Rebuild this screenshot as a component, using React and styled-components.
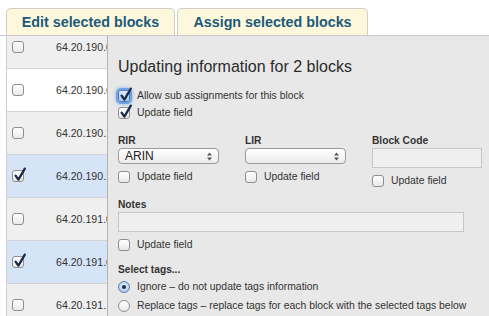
import React from "react";
import styled, { createGlobalStyle, css } from "styled-components";

const Global = createGlobalStyle`
  html, body {
    margin: 0;
    padding: 0;
    background: #fff;
    overflow: hidden;
  }
  body {
    font-family: "Liberation Sans", Arial, Helvetica, sans-serif;
    color: #333;
  }
`;

const Page = styled.div`
  width: 489px;
  height: 316px;
  padding-top: 8px;
  box-sizing: border-box;
  overflow: hidden;
`;

const TabBar = styled.div`
  display: flex;
  gap: 2px;
  padding-left: 6px;
  height: 27px;
  border-bottom: 1px solid #c9c9c9;
`;

const Tab = styled.div`
  width: ${(p) => p.w}px;
  box-sizing: border-box;
  background: #fdf8dc;
  border: 1px solid #d0d0c8;
  border-bottom: none;
  border-radius: 5px 5px 0 0;
  color: #1b5a7b;
  font-weight: bold;
  font-size: 14.3px;
  line-height: 26px;
  text-align: center;
`;

const Content = styled.div`
  display: flex;
  margin-left: 6px;
  height: 280px;
`;

const Table = styled.div`
  width: 100px;
  border-left: 1px solid #cfcfcf;
  overflow: hidden;
  flex-shrink: 0;
`;

const Rows = styled.div`
  margin-top: -10px;
`;

const Row = styled.div`
  display: flex;
  align-items: center;
  height: 42px;
  border-bottom: 1px solid #d2d2d2;
  padding-left: 5px;
  background: ${(p) => (p.selected ? "#d6e4f8" : p.odd ? "#efefef" : "#fff")};
`;

const Ip = styled.span`
  margin-left: 32px;
  font-size: 10.6px;
  color: #333;
  white-space: nowrap;
`;

const Panel = styled.div`
  flex: 1;
  background: #e8e8e8;
  border-left: 1px solid #b4b4b4;
  padding: 21px 0 0 10px;
  box-sizing: border-box;
`;

const Title = styled.h2`
  margin: 0 0 10px;
  font-size: 16px;
  font-weight: normal;
  line-height: 20px;
  color: #2b2b2b;
`;

const CheckRow = styled.label`
  display: flex;
  align-items: center;
  gap: 7px;
  height: ${(p) => p.h || 17}px;
  font-size: 10.4px;
  color: #333;
  white-space: nowrap;
`;

const boxBase = css`
  position: relative;
  width: 12px;
  height: 12px;
  box-sizing: border-box;
  flex-shrink: 0;
  border: 1px solid #8e8e8e;
  background: linear-gradient(#ffffff, #e9e9e9);
`;

const Box = styled.span`
  ${boxBase};
  border-radius: 3px;
  ${(p) =>
    p.focus &&
    css`
      border-color: #4d7fbf;
      background: linear-gradient(#dce9fb, #aecbf0);
      box-shadow: 0 0 0 2px rgba(93, 150, 220, 0.8), 0 0 3px 3px rgba(120, 170, 230, 0.5);
    `}
  svg {
    position: absolute;
    left: 0;
    top: -4px;
  }
`;

const Round = styled.span`
  ${boxBase};
  border-radius: 50%;
  ${(p) =>
    p.checked &&
    css`
      border-color: #5a7fae;
      background: radial-gradient(circle at 50% 40%, #e8f1fd, #9cc0ec);
      &::after {
        content: "";
        position: absolute;
        left: 3px;
        top: 3px;
        width: 4px;
        height: 4px;
        border-radius: 50%;
        background: #1d2e4f;
      }
    `}
`;

const Label = styled.div`
  font-size: 10.2px;
  font-weight: bold;
  line-height: 14px;
  color: #333;
`;

const Fields = styled.div`
  display: grid;
  grid-template-columns: 127px 127px auto;
  margin-top: 13px;
`;

const Field = styled.div`
  display: flex;
  flex-direction: column;
`;

const SelectBox = styled.div`
  display: flex;
  align-items: center;
  justify-content: space-between;
  width: 101px;
  height: 16px;
  box-sizing: border-box;
  margin-bottom: 4px;
  padding: 0 6px;
  border: 1px solid #9a9a9a;
  border-radius: 4px;
  background: linear-gradient(#ffffff, #ececec);
  font-size: 12px;
  color: #222;
`;

const Input = styled.div`
  width: ${(p) => p.w}px;
  height: 20px;
  box-sizing: border-box;
  margin-bottom: 4px;
  border: 1px solid #c6c6c6;
  background: #efefef;
`;

const Notes = styled.div`
  margin-top: 9px;
  display: flex;
  flex-direction: column;
`;

const Tags = styled.div`
  margin-top: 10px;
  display: flex;
  flex-direction: column;
`;

function Check({ checked, focus }) {
  return (
    <Box focus={focus}>
      {checked && (
        <svg width="14" height="15" viewBox="0 0 14 15">
          <path d="M2.6 8.6 L5.4 12.6 L11.8 1.6" fill="none" stroke="#1b2a4c" strokeWidth="2.3" strokeLinecap="round" strokeLinejoin="round" />
        </svg>
      )}
    </Box>
  );
}

function Select({ value }) {
  return (
    <SelectBox>
      <span>{value}</span>
      <svg width="5" height="9" viewBox="0 0 5 9">
        <path d="M0 3.5 L2.5 0.5 L5 3.5 Z M0 5.5 L2.5 8.5 L5 5.5 Z" fill="#555" />
      </svg>
    </SelectBox>
  );
}

const rows = [
  { ip: "64.20.190.0/26" },
  { ip: "64.20.190.64/26" },
  { ip: "64.20.190.128/26" },
  { ip: "64.20.190.192/26", selected: true },
  { ip: "64.20.191.0/26" },
  { ip: "64.20.191.64/26", selected: true },
  { ip: "64.20.191.128/26" },
];

export default function App() {
  return (
    <Page>
      <Global />
      <TabBar>
        <Tab w={169}>Edit selected blocks</Tab>
        <Tab w={191}>Assign selected blocks</Tab>
      </TabBar>
      <Content>
        <Table>
          <Rows>
            {rows.map((r, i) => (
              <Row key={i} odd={i % 2 === 0} selected={r.selected}>
                <Check checked={r.selected} />
                <Ip>{r.ip}</Ip>
              </Row>
            ))}
          </Rows>
        </Table>
        <Panel>
          <Title>Updating information for 2 blocks</Title>
          <CheckRow>
            <Check checked focus />
            Allow sub assignments for this block
          </CheckRow>
          <CheckRow>
            <Check checked />
            Update field
          </CheckRow>
          <Fields>
            <Field>
              <Label>RIR</Label>
              <Select value="ARIN" />
              <CheckRow>
                <Check />
                Update field
              </CheckRow>
            </Field>
            <Field>
              <Label>LIR</Label>
              <Select value="" />
              <CheckRow>
                <Check />
                Update field
              </CheckRow>
            </Field>
            <Field>
              <Label>Block Code</Label>
              <Input w={110} />
              <CheckRow>
                <Check />
                Update field
              </CheckRow>
            </Field>
          </Fields>
          <Notes>
            <Label>Notes</Label>
            <Input w={346} />
            <CheckRow>
              <Check />
              Update field
            </CheckRow>
          </Notes>
          <Tags>
            <Label>Select tags...</Label>
            <CheckRow h={19}>
              <Round checked />
              Ignore – do not update tags information
            </CheckRow>
            <CheckRow h={19}>
              <Round />
              Replace tags – replace tags for each block with the selected tags below
            </CheckRow>
          </Tags>
        </Panel>
      </Content>
    </Page>
  );
}
